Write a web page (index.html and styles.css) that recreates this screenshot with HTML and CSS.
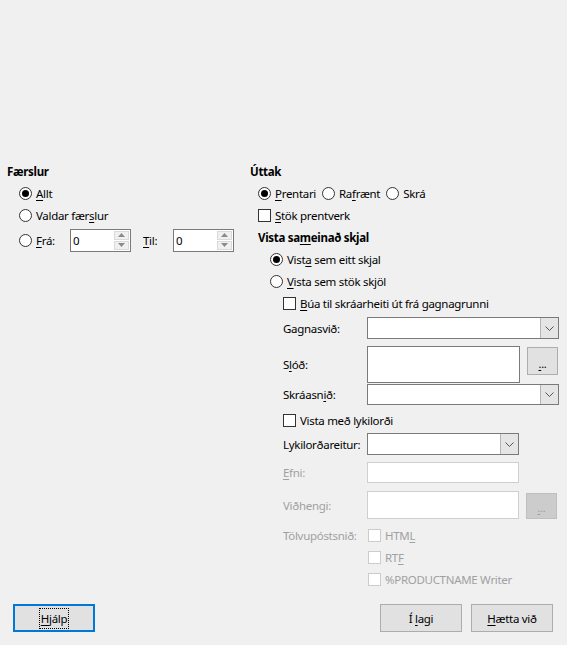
FILE: index.html
```html
<!DOCTYPE html>
<html lang="is">
<head>
<meta charset="utf-8">
<title>Póstsamruni</title>
<link rel="stylesheet" href="styles.css">
</head>
<body>
<div class="dialog">
  <div class="content">
    <section class="col-left">
      <div class="row title">Færslur</div>
      <div class="row ind-l"><span class="radio on"></span><span><u>A</u>llt</span></div>
      <div class="row ind-l"><span class="radio"></span><span>Valdar fær<u>s</u>lur</span></div>
      <div class="row ind-l range">
        <span class="radio"></span><span class="range-lbl"><u>F</u>rá:</span>
        <div class="spin"><span class="spin-val">0</span><span class="spin-btns"><span class="sb"><svg width="7" height="4" viewBox="0 0 7 4"><path d="M0 4 L3.5 0 L7 4Z" fill="#8a8a8a"/></svg></span><span class="sb"><svg width="7" height="4" viewBox="0 0 7 4"><path d="M0 0 L3.5 4 L7 0Z" fill="#8a8a8a"/></svg></span></span></div>
        <span class="til-lbl"><u>T</u>il:</span>
        <div class="spin"><span class="spin-val">0</span><span class="spin-btns"><span class="sb"><svg width="7" height="4" viewBox="0 0 7 4"><path d="M0 4 L3.5 0 L7 4Z" fill="#8a8a8a"/></svg></span><span class="sb"><svg width="7" height="4" viewBox="0 0 7 4"><path d="M0 0 L3.5 4 L7 0Z" fill="#8a8a8a"/></svg></span></span></div>
      </div>
    </section>
    <section class="col-right">
      <div class="row title">Úttak</div>
      <div class="row ind-r1">
        <span class="opt"><span class="radio on"></span><span><u>P</u>rentari</span></span>
        <span class="opt"><span class="radio"></span><span>Ra<u>f</u>rænt</span></span>
        <span class="opt"><span class="radio"></span><span>Skrá</span></span>
      </div>
      <div class="row ind-r1"><span class="check"></span><span><u>S</u>tök prentverk</span></div>
      <div class="row ind-r1 title"><span>Vista sa<u>m</u>einað skjal</span></div>
      <div class="row ind-r2"><span class="radio on"></span><span>Vist<u>a</u> sem eitt skjal</span></div>
      <div class="row ind-r2"><span class="radio"></span><span><u>V</u>ista sem stök skjöl</span></div>
      <div class="row ind-r3"><span class="check"></span><span><u>B</u>úa til skráarheiti út frá gagnagrunni</span></div>
      <div class="form">
        <div class="frow r-gagn"><span class="flbl">Gagnasvið:</span><div class="combo w192"><span class="combo-btn"><svg width="9" height="5" viewBox="0 0 9 5"><path d="M0.5 0.5 L4.5 4.5 L8.5 0.5" fill="none" stroke="#555" stroke-width="1"/></svg></span></div></div>
        <div class="frow r-slod"><span class="flbl">S<u>l</u>óð:</span><div class="tbox slod"></div><span class="btn-dots"><span><u>.</u>..</span></span></div>
        <div class="frow r-snid"><span class="flbl">Skráasn<u>i</u>ð:</span><div class="combo w192 h21"><span class="combo-btn"><svg width="9" height="5" viewBox="0 0 9 5"><path d="M0.5 0.5 L4.5 4.5 L8.5 0.5" fill="none" stroke="#555" stroke-width="1"/></svg></span></div></div>
        <div class="frow r-lyk"><span class="check"></span><span>Vista með lykilorði</span></div>
        <div class="frow r-lykr"><span class="flbl">Lykilorðareitur:</span><div class="combo w152"><span class="combo-btn"><svg width="9" height="5" viewBox="0 0 9 5"><path d="M0.5 0.5 L4.5 4.5 L8.5 0.5" fill="none" stroke="#555" stroke-width="1"/></svg></span></div></div>
        <div class="frow r-efni dis"><span class="flbl"><u>E</u>fni:</span><div class="tbox dis-box efni"></div></div>
        <div class="frow r-vid dis"><span class="flbl">Viðhengi:</span><div class="tbox dis-box vid"></div><span class="btn-dots dis-btn"><span><u>.</u>..</span></span></div>
        <div class="frow r-mail dis"><span class="flbl">Tölvupóstsnið:</span><span class="check dis-check"></span><span>HTM<u>L</u></span></div>
        <div class="frow r-sub dis"><span class="flbl"></span><span class="check dis-check"></span><span>RT<u>F</u></span></div>
        <div class="frow r-sub dis"><span class="flbl"></span><span class="check dis-check"></span><span>%PRODUCTNAME Writer</span></div>
      </div>
    </section>
  </div>
  <div class="buttons">
    <span class="btn btn-help"><span class="focus"><u>H</u>jálp</span></span>
    <span class="spacer"></span>
    <span class="btn"><span>Í <u>l</u>agi</span></span>
    <span class="btn"><span><u>H</u>ætta við</span></span>
  </div>
</div>
</body>
</html>
```

FILE: styles.css
```css
html, body {
  margin: 0;
  padding: 0;
  background: #f0f0f0;
}
body {
  font-family: "Noto Sans", "Open Sans", sans-serif;
  font-size: 11.5px;
  letter-spacing: -0.3px;
  color: #000;
}
u {
  text-decoration: underline;
  text-underline-offset: 2px;
}
.dialog {
  height: 645px;
  display: flex;
  flex-direction: column;
  box-sizing: border-box;
  padding-top: 160px;
}
.content {
  flex: 1;
  display: flex;
}
.col-left {
  width: 243px;
  padding-left: 7px;
  display: flex;
  flex-direction: column;
}
.col-right {
  flex: 1;
  display: flex;
  flex-direction: column;
}
.row {
  height: 22px;
  display: flex;
  align-items: center;
  white-space: nowrap;
}
.title {
  font-weight: bold;
}
.ind-l { padding-left: 12px; }
.ind-r1 { padding-left: 8px; }
.ind-r2 { padding-left: 20px; }
.ind-r3 { padding-left: 33px; }

.radio {
  width: 13px;
  height: 13px;
  box-sizing: border-box;
  border: 1px solid #333;
  border-radius: 50%;
  background: #fff;
  margin-right: 4px;
  display: inline-flex;
  align-items: center;
  justify-content: center;
  flex: none;
}
.radio.on::after {
  content: "";
  width: 7px;
  height: 7px;
  border-radius: 50%;
  background: #000;
}
.check {
  width: 13px;
  height: 13px;
  box-sizing: border-box;
  border: 1px solid #333;
  background: #fff;
  margin-right: 4px;
  flex: none;
}
.opt {
  display: inline-flex;
  align-items: center;
  margin-right: 6px;
}

.range {
  margin-top: 3px;
}
.range-lbl {
  width: 34px;
}
.til-lbl {
  margin-left: 12px;
  width: 30px;
}
.spin {
  width: 61px;
  height: 23px;
  box-sizing: border-box;
  border: 1px solid #7a7a7a;
  background: #fff;
  display: flex;
}
.spin-val {
  flex: 1;
  padding-left: 2px;
  display: flex;
  align-items: center;
}
.spin-btns {
  width: 15px;
  display: flex;
  flex-direction: column;
  padding: 1px 1px 1px 0;
  gap: 1px;
}
.sb {
  flex: 1;
  background: #f0f0f0;
  border: 1px solid #dadada;
  display: flex;
  align-items: center;
  justify-content: center;
}

.form {
  padding-left: 33px;
  display: flex;
  flex-direction: column;
}
.frow {
  display: flex;
  align-items: center;
  white-space: nowrap;
}
.flbl {
  width: 84px;
  flex: none;
}
.r-gagn { margin-top: 3px; height: 22px; }
.r-slod { margin-top: 7px; height: 37px; }
.r-snid { margin-top: 1px; height: 21px; }
.r-lyk { margin-top: 4px; height: 22px; }
.r-lykr { margin-top: 2px; height: 22px; }
.r-efni { margin-top: 7px; height: 21px; }
.r-vid { margin-top: 8px; height: 28px; }
.r-mail { margin-top: 5px; height: 22px; }
.r-sub { height: 22px; }

.combo {
  height: 22px;
  box-sizing: border-box;
  border: 1px solid #7a7a7a;
  background: #fff;
  display: flex;
  justify-content: flex-end;
}
.combo.h21 { height: 21px; }
.w192 { width: 192px; }
.w152 { width: 152px; }
.combo-btn {
  width: 17px;
  background: #e5e5e5;
  border-left: 1px solid #b4b4b4;
  display: flex;
  align-items: center;
  justify-content: center;
}
.tbox {
  box-sizing: border-box;
  border: 1px solid #7a7a7a;
  background: #fff;
}
.slod {
  width: 153px;
  height: 37px;
}
.efni {
  width: 152px;
  height: 21px;
}
.vid {
  width: 152px;
  height: 28px;
}
.dis-box {
  border-color: #cfcfcf;
}
.btn-dots {
  margin-left: 7px;
  width: 31px;
  height: 28px;
  box-sizing: border-box;
  border: 1px solid #adadad;
  background: #e1e1e1;
  display: flex;
  align-items: flex-end;
  justify-content: center;
  padding-bottom: 5px;
  font-size: 11px;
  line-height: 1;
  align-self: flex-start;
  margin-top: 1px;
}
.dis-btn {
  background: #cccccc;
  border-color: #bfbfbf;
  color: #a0a0a0;
  margin-top: 2px;
  height: 26px;
}
.dis {
  color: #a0a0a0;
}
.dis-check {
  border-color: #cccccc;
  margin-left: 1px;
}

.buttons {
  display: flex;
  align-items: center;
  padding: 0 14px 13px 13px;
  gap: 9px;
}
.spacer { flex: 1; }
.btn {
  width: 82px;
  height: 28px;
  box-sizing: border-box;
  border: 1px solid #adadad;
  background: #e1e1e1;
  display: flex;
  align-items: center;
  justify-content: center;
}
.btn-help {
  border: 2px solid #0078d7;
}
.focus {
  outline: 1px dotted #000;
  padding: 2px 1px;
  line-height: 15px;
}
```
